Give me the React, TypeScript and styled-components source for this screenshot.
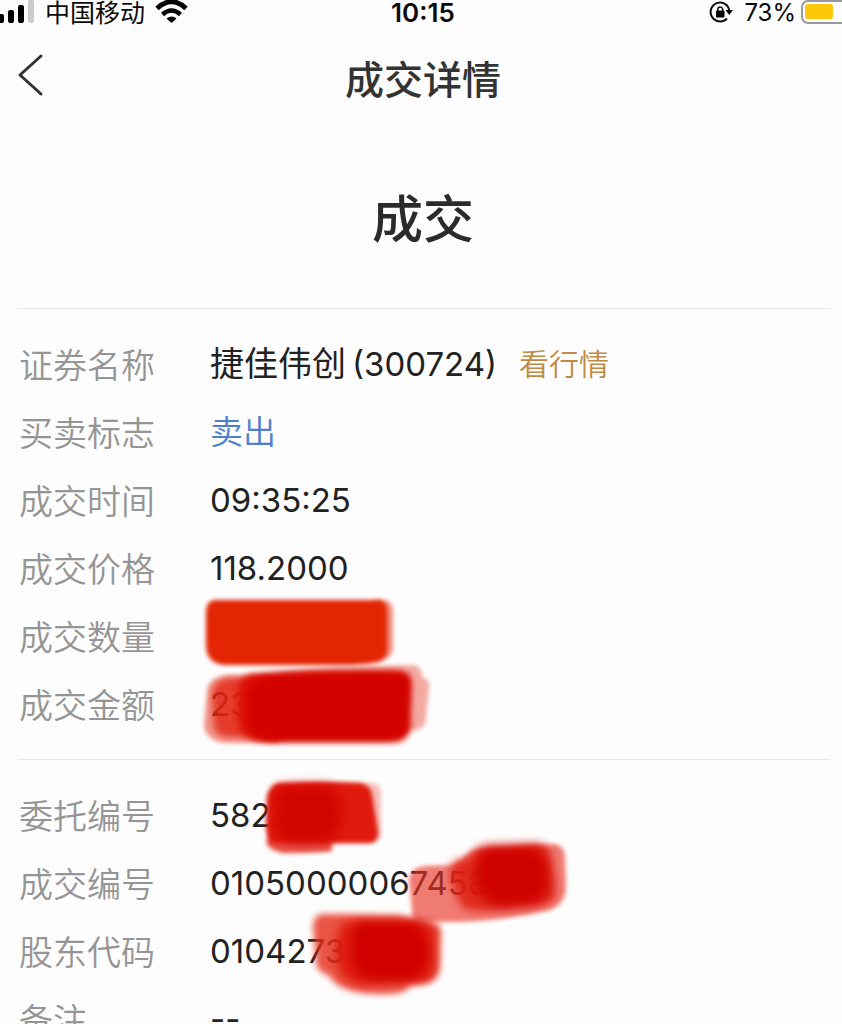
import React from "react";
import styled, { createGlobalStyle } from "styled-components";

const GlobalStyle = createGlobalStyle`
  * { box-sizing: border-box; }
  body {
    margin: 0;
    background: #fdfdfd;
    color: #222;
    font-family: Inter, "Noto Sans CJK SC", sans-serif;
  }
`;

const Page = styled.div`
  overflow: hidden;
`;

const StatusBar = styled.div`
  display: grid;
  grid-template-columns: 1fr auto 1fr;
  align-items: center;
  height: 26px;
  color: #0a0a0a;
  font-size: 25px;
  line-height: 26px;
`;

const Carrier = styled.div`
  display: flex;
  align-items: center;
  gap: 10px;
`;

const Clock = styled.time`
  padding-left: 4px;
  font-size: 26px;
  font-weight: 600;
`;

const Power = styled.div`
  display: flex;
  align-items: center;
  justify-content: flex-end;
`;

const Percent = styled.span`
  margin: 0 5px 0 11px;
  font-size: 24px;
`;

const Header = styled.header`
  display: grid;
  grid-template-columns: 1fr auto 1fr;
  padding: 24px 12px 24px 16px;
`;

const BackButton = styled.button`
  display: flex;
  justify-self: start;
  align-items: center;
  height: 50px;
  padding: 0;
  border: 0;
  background: none;
  color: #333;
  cursor: pointer;
`;

const Title = styled.h1`
  margin: 0;
  color: #333;
  font-size: 39px;
  font-weight: 500;
  line-height: 60px;
`;

const State = styled.h2`
  margin: 0;
  padding: 50px 12px 52px 16px;
  color: #2b2b2b;
  font-size: 51px;
  font-weight: 500;
  line-height: 72px;
  text-align: center;
`;

const Details = styled.dl`
  margin: 0 12px 0 18px;
  padding: 22px 0 20px;
  border-top: 1px solid #e6e6e6;
`;

const Row = styled.div`
  display: flex;
  height: 68px;
`;

const Label = styled.dt`
  flex: none;
  width: 192px;
  padding-left: 1px;
  color: #959595;
  font-size: 34px;
  font-weight: 350;
  line-height: 70px;
`;

const Value = styled.dd<{ $tone?: string }>`
  position: relative;
  display: flex;
  flex: 1;
  margin: 0;
  color: ${(p) => p.$tone ?? "#222"};
  font-size: 33px;
  font-weight: ${(p) => (p.$tone ? 350 : 400)};
  line-height: 66px;
  white-space: nowrap;
`;

const StockName = styled.span`
  margin-right: 6px;
  font-size: 34px;
`;

const QuoteLink = styled.a`
  margin-left: 22px;
  color: #c08a45;
  font-size: 30px;
  font-weight: 350;
  text-decoration: none;
`;

const Brush = styled.svg`
  position: absolute;
  inset: 0;
  z-index: 1;
  width: 100%;
  height: 100%;
  overflow: visible;
  pointer-events: none;
`;

type Stroke = { d: string; fill: string; opacity?: number; soft?: number };

function Redaction({ id, strokes }: { id: string; strokes: Stroke[] }) {
  return (
    <Brush aria-hidden="true">
      {strokes.map((s, i) => (
        <g key={i}>
          <filter
            id={`${id}${i}`}
            x="-30%"
            y="-30%"
            width="160%"
            height="160%"
            colorInterpolationFilters="sRGB"
          >
            <feGaussianBlur stdDeviation={s.soft ?? 2} />
          </filter>
          <path d={s.d} fill={s.fill} opacity={s.opacity} filter={`url(#${id}${i})`} />
        </g>
      ))}
    </Brush>
  );
}

const quantityStrokes: Stroke[] = [
  { d: "M165 -3H175Q183 -1 183 8V46Q182 56 166 59Z", fill: "#e32503", opacity: 0.5 },
  { d: "M6 -3H168Q177 -2 177 8V48Q176 57 164 60Q150 62 130 62H14Q-4 60 -4 42V10Q-4 -3 6 -3Z", fill: "#e32503", soft: 2 },
];

const amountStrokes: Stroke[] = [
  { d: "M60 3Q110 -4 160 -5L204 -6Q212 -4 212 6Q220 8 219 17L215 53Q212 60 195 60V20Z", fill: "#e52b16", opacity: 0.4 },
  { d: "M18 4H60L70 72H14Q-6 68 -6 54L-3 20Q-2 6 18 4Z", fill: "#e52b16", opacity: 0.5 },
  { d: "M22 7H60L70 66H22Q6 66 4 56L2 24Q4 8 22 7Z", fill: "#e22412", opacity: 0.78, soft: 3 },
  { d: "M42 3Q80 0 120 0H190Q201 2 201 10L200 58Q196 71 184 71H60Q28 70 28 50V20Q30 6 42 3Z", fill: "#de1206", soft: 3 },
  { d: "M54 6Q100 1 190 2Q199 4 199 14L197 60Q190 69 170 69H60Q38 66 37 50V22Q42 10 54 6Z", fill: "#d10200", soft: 3 },
];

const orderStrokes: Stroke[] = [
  { d: "M90 1H162Q171 2 171 10V54Q170 61 160 61H90Z", fill: "#e83a28", opacity: 0.32 },
  { d: "M60 50H122V69Q110 71 72 71Q58 68 56 60Z", fill: "#e32818", opacity: 0.8 },
  { d: "M68 1Q110 -1 150 1Q160 3 162 12L168 50Q168 61 158 61H62Q56 54 56 44L57 14Q60 3 68 1Z", fill: "#e01b0d" },
  { d: "M72 4H118Q132 10 132 28Q132 52 116 60H76Q62 54 64 32Q62 8 72 4Z", fill: "#d20500", soft: 6 },
];

const dealStrokes: Stroke[] = [
  { d: "M216 16L244 15L262 0L346 -6Q355 -3 355 8L356 38Q355 54 340 60Q290 72 240 72H209Q200 68 202 60L199 30Q200 17 216 16Z", fill: "#ea3325", opacity: 0.64 },
  { d: "M242 12L258 8L268 -2L330 -6Q339 -4 341 6L346 42Q344 52 336 54L276 61Q254 62 250 54L240 28Z", fill: "#df1e10", opacity: 0.85, soft: 4 },
  { d: "M276 -3H326Q339 4 339 28Q339 48 326 54L290 57Q264 50 265 24Q266 4 276 -3Z", fill: "#cf0200", soft: 6 },
];

const holderStrokes: Stroke[] = [
  { d: "M114 -4L188 -3L222 4Q232 6 231 16L230 50Q228 64 212 66L200 67Q196 76 180 76Q140 78 124 64L118 57Q106 54 106 42L103 8Q104 -4 114 -4Z", fill: "#e62f1c", opacity: 0.82, soft: 3 },
  { d: "M134 4Q150 1 210 4Q225 5 225 18V50Q224 63 210 64L150 67Q134 64 128 50Q122 20 134 4Z", fill: "#dd180b", opacity: 0.9, soft: 4 },
  { d: "M148 5H204Q219 16 218 36Q216 60 196 62H160Q142 56 142 34Q142 12 148 5Z", fill: "#d10100", soft: 5 },
];

function SignalIcon() {
  return (
    <svg width="35" height="26" viewBox="0 0 35 26" role="img" aria-label="信号">
      <rect x="-2" y="14" width="6" height="9" rx="2" />
      <rect x="8" y="10" width="6" height="13" rx="2" />
      <rect x="18" y="5" width="6" height="18" rx="2" />
      <rect x="28" y="0" width="6" height="23" rx="2" fill="#ccc" />
    </svg>
  );
}

function WifiIcon() {
  return (
    <svg width="33" height="26" viewBox="0 0 33 26" role="img" aria-label="无线网络">
      <g fill="none" stroke="#050505" strokeWidth="5">
        <path d="M2 8.500Q16.500 -5 31 8.500" />
        <path d="M7.500 14.500Q16.500 6.500 25.500 14.500" strokeWidth="4.500" />
      </g>
      <path d="M11.500 18.500Q16.500 14.500 21.500 18.500L17.500 22.300Q16.500 23.200 15.500 22.300Z" />
    </svg>
  );
}

function RotationLockIcon() {
  return (
    <svg width="24" height="26" viewBox="0 0 24 26" role="img" aria-label="方向锁定">
      <path d="M18 5.500A9.500 9.500 0 1 0 18 18.500" fill="none" stroke="#111" strokeWidth="2" />
      <path d="M17 4.500Q20 7 20.200 11" fill="none" stroke="#111" strokeWidth="2" />
      <path d="M16.500 10H24L20.200 15Z" />
      <rect x="7" y="10.500" width="8.500" height="7" rx="1" />
      <path d="M8.800 11.500V9.500A2.400 2.400 0 0 1 13.700 9.500V11.500" fill="none" stroke="#111" strokeWidth="1.500" />
    </svg>
  );
}

function BatteryIcon() {
  return (
    <svg width="41" height="26" viewBox="0 0 41 26" role="img" aria-label="电池">
      <rect x="1" y="1" width="50" height="22" rx="6" fill="none" stroke="#999" strokeWidth="2" />
      <rect x="4" y="4" width="28" height="15" rx="3" fill="#fec709" />
    </svg>
  );
}

export default function App() {
  return (
    <Page>
      <GlobalStyle />
      <StatusBar>
        <Carrier>
          <SignalIcon />
          <span>中国移动</span>
          <WifiIcon />
        </Carrier>
        <Clock>10:15</Clock>
        <Power>
          <RotationLockIcon />
          <Percent>73%</Percent>
          <BatteryIcon />
        </Power>
      </StatusBar>
      <Header>
        <BackButton type="button" aria-label="返回">
          <svg width="30" height="44" viewBox="0 0 30 44" fill="none" stroke="currentColor" strokeWidth="3" strokeLinecap="round" strokeLinejoin="round">
            <path d="M25 3L4 22L25 41" />
          </svg>
        </BackButton>
        <Title>成交详情</Title>
      </Header>
      <main>
        <State>成交</State>
        <Details>
          <Row>
            <Label>证券名称</Label>
            <Value>
              <StockName>捷佳伟创</StockName>
              <span>(300724)</span>
              <QuoteLink href="#quote">看行情</QuoteLink>
            </Value>
          </Row>
          <Row>
            <Label>买卖标志</Label>
            <Value $tone="#4f7fca">卖出</Value>
          </Row>
          <Row>
            <Label>成交时间</Label>
            <Value>09:35:25</Value>
          </Row>
          <Row>
            <Label>成交价格</Label>
            <Value>118.2000</Value>
          </Row>
          <Row>
            <Label>成交数量</Label>
            <Value>
              <Redaction id="quantity" strokes={quantityStrokes} />
            </Value>
          </Row>
          <Row>
            <Label>成交金额</Label>
            <Value>
              23
              <Redaction id="amount" strokes={amountStrokes} />
            </Value>
          </Row>
        </Details>
        <Details>
          <Row>
            <Label>委托编号</Label>
            <Value>
              5827
              <Redaction id="order" strokes={orderStrokes} />
            </Value>
          </Row>
          <Row>
            <Label>成交编号</Label>
            <Value>
              01050000067458
              <Redaction id="deal" strokes={dealStrokes} />
            </Value>
          </Row>
          <Row>
            <Label>股东代码</Label>
            <Value>
              0104273
              <Redaction id="holder" strokes={holderStrokes} />
            </Value>
          </Row>
          <Row>
            <Label>备注</Label>
            <Value>--</Value>
          </Row>
        </Details>
      </main>
    </Page>
  );
}
